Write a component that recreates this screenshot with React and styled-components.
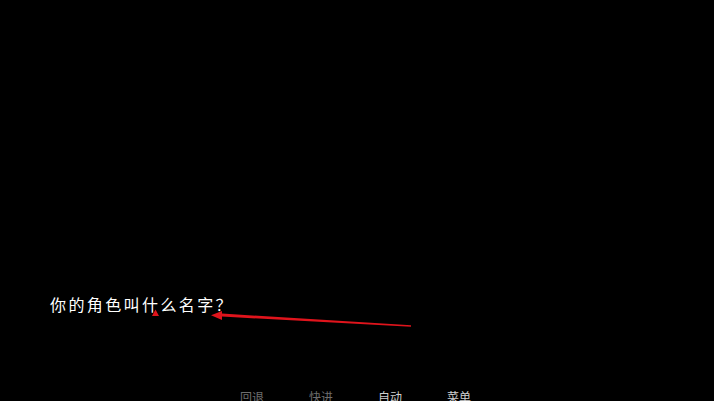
import React from 'react';
import styled, { createGlobalStyle } from 'styled-components';

const GlobalStyle = createGlobalStyle`
  html, body {
    margin: 0;
    padding: 0;
    background: #000;
  }
  body {
    font-family: "Noto Sans CJK SC", "Noto Sans", sans-serif;
  }
`;

const menuItems = [
  { label: '回退', active: false },
  { label: '快进', active: false },
  { label: '自动', active: true },
  { label: '菜单', active: true },
];

export default function App() {
  return (
    <>
      <GlobalStyle />
      <Screen>
        <Dialogue>你的角色叫什么名字？</Dialogue>
        <MenuBar>
          {menuItems.map(({ label, active }) => (
            <MenuItem key={label} active={active}>{label}</MenuItem>
          ))}
        </MenuBar>
        <Annotation width="714" height="401" viewBox="0 0 714 401">
          <polygon points="411,325.2 222,313.6 222,316.6 411,326.8" fill="#e0141c" />
          <polygon points="211,315.3 222,311 222,320" fill="#e0141c" />
          <polygon points="155.5,309.5 152,316 159,316" fill="#e0141c" />
        </Annotation>
      </Screen>
    </>
  );
}

const Screen = styled.div`
  position: relative;
  width: 714px;
  height: 401px;
  overflow: hidden;
  background: #000;
  display: flex;
  flex-direction: column;
`;

const Dialogue = styled.div`
  padding: 294px 0 0 50px;
  font-size: 16px;
  line-height: 20px;
  letter-spacing: 2.4px;
  color: #fff;
`;

const MenuBar = styled.div`
  margin-top: 75px;
  display: flex;
  justify-content: center;
  gap: 45px;
  padding-right: 3px;
`;

const MenuItem = styled.span`
  font-size: 12px;
  line-height: 16px;
  color: ${({ active }) => (active ? '#cfcfcf' : '#6e6e6e')};
`;

const Annotation = styled.svg`
  position: absolute;
  top: 0;
  left: 0;
  pointer-events: none;
`;
